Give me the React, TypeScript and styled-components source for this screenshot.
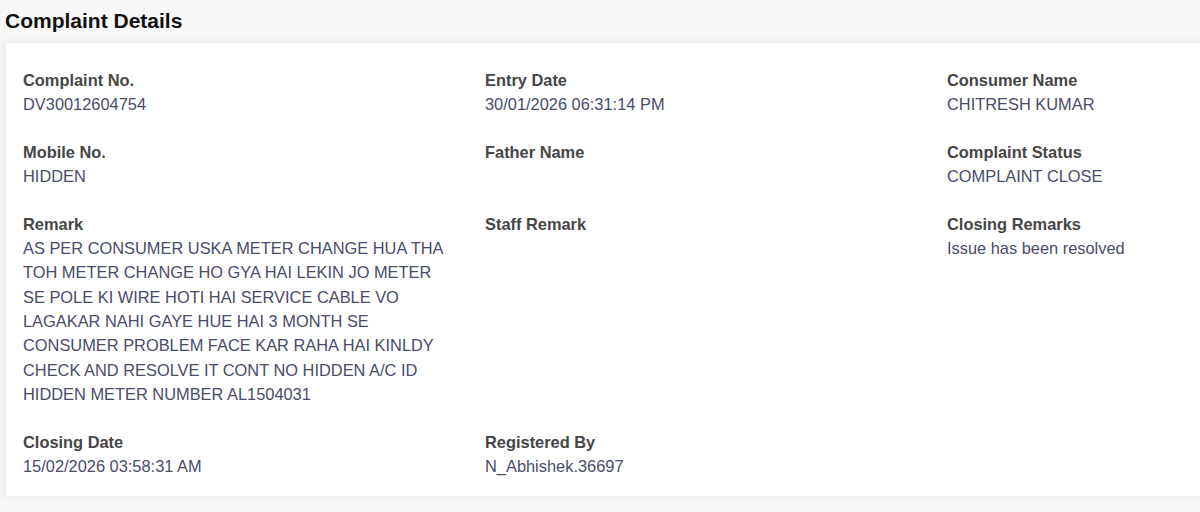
import React from "react";
import styled, { createGlobalStyle } from "styled-components";

const Global = createGlobalStyle`
  html, body { margin: 0; padding: 0; }
  body {
    background: #f8f8f9;
    font-family: "Liberation Sans", Arial, Helvetica, sans-serif;
    overflow: hidden;
    width: 1200px;
    height: 512px;
  }
`;

const Page = styled.div`
  padding: 8px 0 0 0;
`;

const Title = styled.h2`
  margin: 0 0 0 5px;
  font-size: 21px;
  line-height: 26px;
  font-weight: 700;
  color: #111;
`;

const Card = styled.section`
  margin: 8px 0 0 6px;
  width: 1400px;
  background: #fff;
  border-top: 1px solid #ececef;
  box-shadow: -3px 0 8px rgba(225, 228, 240, 0.7);
  padding: 25px 17px 17px 17px;
  box-sizing: border-box;
`;

const Grid = styled.div`
  display: grid;
  grid-template-columns: repeat(3, 430px);
  column-gap: 32px;
  row-gap: 23.5px;
`;

const Field = styled.div`
  display: flex;
  flex-direction: column;
`;

const Label = styled.div`
  font-size: 16.4px;
  line-height: 24px;
  font-weight: 700;
  color: #464646;
`;

const Value = styled.div`
  font-size: 16.4px;
  line-height: 24.4px;
  color: #494c6b;
  min-height: 24px;
`;

const fields: [string, string][] = [
  ["Complaint No.", "DV30012604754"],
  ["Entry Date", "30/01/2026 06:31:14 PM"],
  ["Consumer Name", "CHITRESH KUMAR"],
  ["Mobile No.", "HIDDEN"],
  ["Father Name", ""],
  ["Complaint Status", "COMPLAINT CLOSE"],
  [
    "Remark",
    "AS PER CONSUMER USKA METER CHANGE HUA THA TOH METER CHANGE HO GYA HAI LEKIN JO METER SE POLE KI WIRE HOTI HAI SERVICE CABLE VO LAGAKAR NAHI GAYE HUE HAI 3 MONTH SE CONSUMER PROBLEM FACE KAR RAHA HAI KINLDY CHECK AND RESOLVE IT CONT NO HIDDEN A/C ID HIDDEN METER NUMBER AL1504031",
  ],
  ["Staff Remark", ""],
  ["Closing Remarks", "Issue has been resolved"],
  ["Closing Date", "15/02/2026 03:58:31 AM"],
  ["Registered By", "N_Abhishek.36697"],
];

export default function App() {
  return (
    <Page>
      <Global />
      <Title>Complaint Details</Title>
      <Card>
        <Grid>
          {fields.map(([l, v]) => (
            <Field key={l}>
              <Label>{l}</Label>
              <Value>{v}</Value>
            </Field>
          ))}
        </Grid>
      </Card>
    </Page>
  );
}
